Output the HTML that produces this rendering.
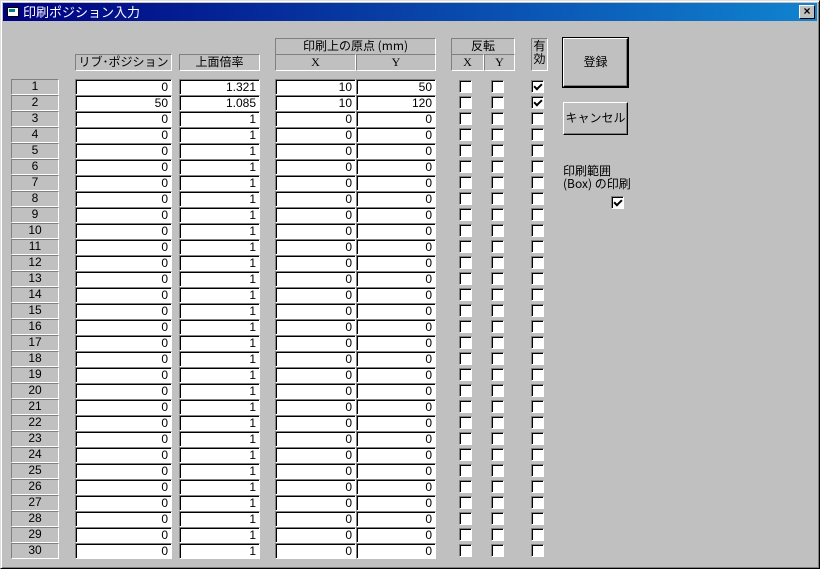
<!DOCTYPE html>
<html><head><meta charset="utf-8"><style>
*{box-sizing:border-box;margin:0;padding:0}
body{width:820px;height:569px;background:#c0c0c0;position:relative;overflow:hidden;font-family:"MS UI Gothic","Noto Sans CJK JP","Liberation Sans",sans-serif;font-size:12px;color:#000}
.win{position:absolute;left:0;top:0;width:820px;height:569px;border:1px solid;border-color:#dfdfdf #000 #000 #dfdfdf;box-shadow:inset 1px 1px 0 #fff,inset -1px -1px 0 #808080}
.title{position:absolute;left:3px;top:3px;width:814px;height:18px;background:linear-gradient(90deg,#000080,#1084d0);color:#fff;font-size:13px;line-height:18px;padding-left:20px}
.ico{position:absolute;left:4px;top:4px;width:12px;height:10px;background:#fff;border:1px solid #000}
.ico:after{content:"";position:absolute;left:1px;top:1px;width:6px;height:3px;background:#008080}
.cls{position:absolute;left:799px;top:5px;width:16px;height:14px;background:#c0c0c0;border:1px solid;border-color:#fff #000 #000 #fff;font:bold 12px/11px "Liberation Sans",sans-serif;text-align:center;color:#000}
.a{position:absolute;white-space:nowrap}
.hd{position:absolute;height:17px;border:1px solid;border-color:#808080 #fff #fff #808080;text-align:center;line-height:14px;font-size:12px;white-space:nowrap}
.r{position:absolute;left:0;width:820px;height:16px}
.l{position:absolute;left:11px;width:48px;height:16px;border:1px solid;border-color:#808080 #fff #fff #808080;text-align:center;line-height:13px;font-family:"Liberation Sans",sans-serif;font-size:12px}
.t{position:absolute;height:16px;background:#fff;border:1px solid;border-color:#808080 #fff #fff #808080;box-shadow:inset 1px 1px 0 #000;text-align:right;padding-right:3px;line-height:14px;font-family:"Liberation Sans",sans-serif;font-size:12px}
.c{position:absolute;top:1px;width:13px;height:13px;background:#fff;border:1px solid;border-color:#808080 #fff #fff #808080;box-shadow:inset 1px 1px 0 #000}
.k:after{content:"";position:absolute;left:2px;top:1px;width:6px;height:3px;border-left:2px solid #000;border-bottom:2px solid #000;transform:rotate(-45deg) translate(-1px,1px);transform-origin:50% 50%}
.f1{left:75px;width:97px}.f2{left:179px;width:81px}.f3{left:275px;width:81px}.f4{left:356px;width:80px}
.x{left:459px}.y{left:491px}.v{left:531px}
.btn{position:absolute;left:563px;width:65px;background:#c0c0c0;border:1px solid;border-color:#fff #000 #000 #fff;box-shadow:inset -1px -1px 0 #808080;text-align:center;font-size:12px;white-space:nowrap;overflow:visible}
</style></head><body>
<div class="win"></div>
<div class="title"><div class="ico"></div>印刷ポジション入力</div>
<div class="cls">×</div>
<div class="hd" style="left:75px;top:54px;width:97px">リブ･ポジション</div>
<div class="hd" style="left:179px;top:54px;width:81px">上面倍率</div>
<div class="hd" style="left:275px;top:38px;width:161px">印刷上の原点 (mm)</div>
<div class="hd" style="left:275px;top:54px;width:81px;font-family:'Liberation Serif',serif">X</div>
<div class="hd" style="left:356px;top:54px;width:80px;font-family:'Liberation Serif',serif">Y</div>
<div class="hd" style="left:451px;top:38px;width:64px">反転</div>
<div class="hd" style="left:451px;top:54px;width:33px;font-family:'Liberation Serif',serif">X</div>
<div class="hd" style="left:484px;top:54px;width:31px;font-family:'Liberation Serif',serif">Y</div>
<div class="hd" style="left:531px;top:38px;width:17px;height:33px;line-height:13px">有<br>効</div>
<div class="btn" style="top:38px;height:49px;line-height:46px;outline:1px solid #000">登録</div>
<div class="btn" style="top:102px;height:33px;line-height:30px">キャンセル</div>
<div class="a" style="left:563px;top:164px;font-size:12px;line-height:13px">印刷範囲<br>(Box) の印刷</div>
<div class="c k" style="left:611px;top:196px"></div>

<div class="r" style="top:79px"><div class="l">1</div><div class="t f1">0</div><div class="t f2">1.321</div><div class="t f3">10</div><div class="t f4">50</div><div class="c x"></div><div class="c y"></div><div class="c v k"></div></div>
<div class="r" style="top:95px"><div class="l">2</div><div class="t f1">50</div><div class="t f2">1.085</div><div class="t f3">10</div><div class="t f4">120</div><div class="c x"></div><div class="c y"></div><div class="c v k"></div></div>
<div class="r" style="top:111px"><div class="l">3</div><div class="t f1">0</div><div class="t f2">1</div><div class="t f3">0</div><div class="t f4">0</div><div class="c x"></div><div class="c y"></div><div class="c v"></div></div>
<div class="r" style="top:127px"><div class="l">4</div><div class="t f1">0</div><div class="t f2">1</div><div class="t f3">0</div><div class="t f4">0</div><div class="c x"></div><div class="c y"></div><div class="c v"></div></div>
<div class="r" style="top:143px"><div class="l">5</div><div class="t f1">0</div><div class="t f2">1</div><div class="t f3">0</div><div class="t f4">0</div><div class="c x"></div><div class="c y"></div><div class="c v"></div></div>
<div class="r" style="top:159px"><div class="l">6</div><div class="t f1">0</div><div class="t f2">1</div><div class="t f3">0</div><div class="t f4">0</div><div class="c x"></div><div class="c y"></div><div class="c v"></div></div>
<div class="r" style="top:175px"><div class="l">7</div><div class="t f1">0</div><div class="t f2">1</div><div class="t f3">0</div><div class="t f4">0</div><div class="c x"></div><div class="c y"></div><div class="c v"></div></div>
<div class="r" style="top:191px"><div class="l">8</div><div class="t f1">0</div><div class="t f2">1</div><div class="t f3">0</div><div class="t f4">0</div><div class="c x"></div><div class="c y"></div><div class="c v"></div></div>
<div class="r" style="top:207px"><div class="l">9</div><div class="t f1">0</div><div class="t f2">1</div><div class="t f3">0</div><div class="t f4">0</div><div class="c x"></div><div class="c y"></div><div class="c v"></div></div>
<div class="r" style="top:223px"><div class="l">10</div><div class="t f1">0</div><div class="t f2">1</div><div class="t f3">0</div><div class="t f4">0</div><div class="c x"></div><div class="c y"></div><div class="c v"></div></div>
<div class="r" style="top:239px"><div class="l">11</div><div class="t f1">0</div><div class="t f2">1</div><div class="t f3">0</div><div class="t f4">0</div><div class="c x"></div><div class="c y"></div><div class="c v"></div></div>
<div class="r" style="top:255px"><div class="l">12</div><div class="t f1">0</div><div class="t f2">1</div><div class="t f3">0</div><div class="t f4">0</div><div class="c x"></div><div class="c y"></div><div class="c v"></div></div>
<div class="r" style="top:271px"><div class="l">13</div><div class="t f1">0</div><div class="t f2">1</div><div class="t f3">0</div><div class="t f4">0</div><div class="c x"></div><div class="c y"></div><div class="c v"></div></div>
<div class="r" style="top:287px"><div class="l">14</div><div class="t f1">0</div><div class="t f2">1</div><div class="t f3">0</div><div class="t f4">0</div><div class="c x"></div><div class="c y"></div><div class="c v"></div></div>
<div class="r" style="top:303px"><div class="l">15</div><div class="t f1">0</div><div class="t f2">1</div><div class="t f3">0</div><div class="t f4">0</div><div class="c x"></div><div class="c y"></div><div class="c v"></div></div>
<div class="r" style="top:319px"><div class="l">16</div><div class="t f1">0</div><div class="t f2">1</div><div class="t f3">0</div><div class="t f4">0</div><div class="c x"></div><div class="c y"></div><div class="c v"></div></div>
<div class="r" style="top:335px"><div class="l">17</div><div class="t f1">0</div><div class="t f2">1</div><div class="t f3">0</div><div class="t f4">0</div><div class="c x"></div><div class="c y"></div><div class="c v"></div></div>
<div class="r" style="top:351px"><div class="l">18</div><div class="t f1">0</div><div class="t f2">1</div><div class="t f3">0</div><div class="t f4">0</div><div class="c x"></div><div class="c y"></div><div class="c v"></div></div>
<div class="r" style="top:367px"><div class="l">19</div><div class="t f1">0</div><div class="t f2">1</div><div class="t f3">0</div><div class="t f4">0</div><div class="c x"></div><div class="c y"></div><div class="c v"></div></div>
<div class="r" style="top:383px"><div class="l">20</div><div class="t f1">0</div><div class="t f2">1</div><div class="t f3">0</div><div class="t f4">0</div><div class="c x"></div><div class="c y"></div><div class="c v"></div></div>
<div class="r" style="top:399px"><div class="l">21</div><div class="t f1">0</div><div class="t f2">1</div><div class="t f3">0</div><div class="t f4">0</div><div class="c x"></div><div class="c y"></div><div class="c v"></div></div>
<div class="r" style="top:415px"><div class="l">22</div><div class="t f1">0</div><div class="t f2">1</div><div class="t f3">0</div><div class="t f4">0</div><div class="c x"></div><div class="c y"></div><div class="c v"></div></div>
<div class="r" style="top:431px"><div class="l">23</div><div class="t f1">0</div><div class="t f2">1</div><div class="t f3">0</div><div class="t f4">0</div><div class="c x"></div><div class="c y"></div><div class="c v"></div></div>
<div class="r" style="top:447px"><div class="l">24</div><div class="t f1">0</div><div class="t f2">1</div><div class="t f3">0</div><div class="t f4">0</div><div class="c x"></div><div class="c y"></div><div class="c v"></div></div>
<div class="r" style="top:463px"><div class="l">25</div><div class="t f1">0</div><div class="t f2">1</div><div class="t f3">0</div><div class="t f4">0</div><div class="c x"></div><div class="c y"></div><div class="c v"></div></div>
<div class="r" style="top:479px"><div class="l">26</div><div class="t f1">0</div><div class="t f2">1</div><div class="t f3">0</div><div class="t f4">0</div><div class="c x"></div><div class="c y"></div><div class="c v"></div></div>
<div class="r" style="top:495px"><div class="l">27</div><div class="t f1">0</div><div class="t f2">1</div><div class="t f3">0</div><div class="t f4">0</div><div class="c x"></div><div class="c y"></div><div class="c v"></div></div>
<div class="r" style="top:511px"><div class="l">28</div><div class="t f1">0</div><div class="t f2">1</div><div class="t f3">0</div><div class="t f4">0</div><div class="c x"></div><div class="c y"></div><div class="c v"></div></div>
<div class="r" style="top:527px"><div class="l">29</div><div class="t f1">0</div><div class="t f2">1</div><div class="t f3">0</div><div class="t f4">0</div><div class="c x"></div><div class="c y"></div><div class="c v"></div></div>
<div class="r" style="top:543px"><div class="l">30</div><div class="t f1">0</div><div class="t f2">1</div><div class="t f3">0</div><div class="t f4">0</div><div class="c x"></div><div class="c y"></div><div class="c v"></div></div>
</body></html>
